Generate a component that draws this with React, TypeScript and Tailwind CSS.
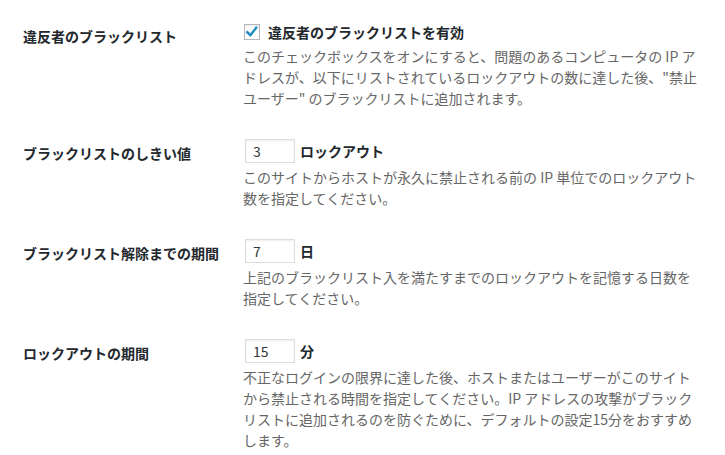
import type { ReactNode } from "react";

type RowProps = {
  label: string;
  labelOffset: string;
  control: ReactNode;
  lines: string[];
  descGap: string;
};

function SettingRow({ label, labelOffset, control, lines, descGap }: RowProps) {
  return (
    <div className="flex">
      <div className={`w-[220px] shrink-0 ${labelOffset} text-[14px] leading-[18px] font-semibold text-[#23282d]`}>
        {label}
      </div>
      <div className="flex flex-col">
        {control}
        <p className={`${descGap} text-[14px] leading-[21px] text-[#666]`}>
          {lines.map((line) => (
            <span key={line} className="block whitespace-nowrap">
              {line}
            </span>
          ))}
        </p>
      </div>
    </div>
  );
}

function Checkbox() {
  return (
    <span className="w-[16px] h-[16px] ml-[1px] border border-[#b4b9be] bg-white shadow-[inset_0_1px_2px_rgba(0,0,0,0.1)] flex items-center justify-center">
      <svg width="14" height="14" viewBox="0 0 14 14">
        <path d="M2.3 7.2 L5.3 10.2 L11.2 2.8" fill="none" stroke="#1e8cbe" strokeWidth="2.4" strokeLinecap="square" />
      </svg>
    </span>
  );
}

function NumberField({ value, unit }: { value: string; unit: string }) {
  return (
    <div className="flex items-center h-[24px]">
      <input
        type="text"
        defaultValue={value}
        className="w-[50px] h-[24px] ml-[2px] px-[7px] border border-[#ddd] bg-white shadow-[inset_0_1px_2px_rgba(0,0,0,0.07)] text-[14px] text-[#32373c] outline-none"
      />
      <span className="ml-[5px] text-[14px] font-semibold text-[#23282d]">{unit}</span>
    </div>
  );
}

export default function App() {
  return (
    <div
      className="w-[725px] h-[455px] overflow-hidden bg-white pl-[23px] pt-[23px] flex flex-col gap-[30px]"
      style={{ fontFamily: '"Noto Sans CJK JP", "Noto Sans", sans-serif' }}
    >
      <SettingRow
        label="違反者のブラックリスト"
        labelOffset="pt-[4px]"
        descGap="mt-[5px]"
        control={
          <label className="flex items-center h-[18px] gap-[8px]">
            <Checkbox />
            <span className="text-[14px] font-semibold text-[#23282d]">違反者のブラックリストを有効</span>
          </label>
        }
        lines={[
          "このチェックボックスをオンにすると、問題のあるコンピュータの IP ア",
          'ドレスが、以下にリストされているロックアウトの数に達した後、"禁止',
          'ユーザー" のブラックリストに追加されます。',
        ]}
      />
      <SettingRow
        label="ブラックリストのしきい値"
        labelOffset="pt-[5px]"
        descGap="mt-[4px]"
        control={<NumberField value="3" unit="ロックアウト" />}
        lines={["このサイトからホストが永久に禁止される前の IP 単位でのロックアウト", "数を指定してください。"]}
      />
      <SettingRow
        label="ブラックリスト解除までの期間"
        labelOffset="pt-[5px]"
        descGap="mt-[4px]"
        control={<NumberField value="7" unit="日" />}
        lines={["上記のブラックリスト入を満たすまでのロックアウトを記憶する日数を", "指定してください。"]}
      />
      <SettingRow
        label="ロックアウトの期間"
        labelOffset="pt-[5px]"
        descGap="mt-[4px]"
        control={<NumberField value="15" unit="分" />}
        lines={[
          "不正なログインの限界に達した後、ホストまたはユーザーがこのサイト",
          "から禁止される時間を指定してください。IP アドレスの攻撃がブラック",
          "リストに追加されるのを防ぐために、デフォルトの設定15分をおすすめ",
          "します。",
        ]}
      />
    </div>
  );
}
